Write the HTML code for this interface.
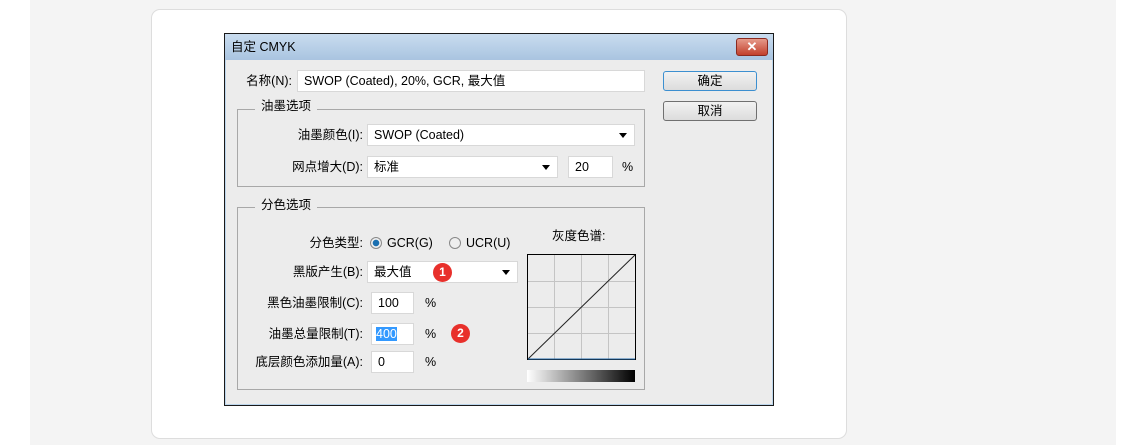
<!DOCTYPE html>
<html><head><meta charset="utf-8"><style>
*{margin:0;padding:0;box-sizing:border-box}
body{width:1146px;height:445px;background:#fff;position:relative;overflow:hidden;font-family:"Liberation Sans","Noto Sans CJK SC",sans-serif;font-size:12.5px;color:#000;line-height:16px}
.a{position:absolute}
.gray{left:30px;top:0;width:1086px;height:445px;background:#f4f4f4}
.card{left:151px;top:9px;width:696px;height:430px;background:#fff;border:1px solid #ddd;border-radius:9px}
.dlg{left:224px;top:33px;width:550px;height:373px;background:#ececec;border:1px solid #1a1a1a;box-shadow:inset 0 0 0 1px #bcd6ec}
.title{left:225px;top:34px;width:548px;height:26px;background:linear-gradient(#c9dcef,#a9c4e0)}
.close{left:736px;top:38px;width:32px;height:18px;border:1px solid #8a2a20;border-radius:3px;background:linear-gradient(#e69a8a,#c2402c);color:#fff;font-weight:bold;text-align:center;line-height:16px;font-size:13px}
.in{background:#fff;border:1px solid #d8d8d8;height:22px;line-height:20px;padding-left:6px}
.btn{border:1px solid #707070;border-radius:3px;background:linear-gradient(#f2f2f2,#dcdcdc);text-align:center;line-height:18px;height:20px;width:94px}
.grp{border:1px solid #a8a8a8}
.leg{background:#ececec;padding:0 6px}
.lbl{text-align:right;width:140px}
.arr{position:absolute;right:7px;top:8px;border-left:4px solid transparent;border-right:4px solid transparent;border-top:5px solid #000}
.badge{width:19px;height:19px;border-radius:50%;background:#e8302b;color:#fff;text-align:center;line-height:19px;font-size:12px;font-weight:bold}
.radio{width:12px;height:12px;border-radius:50%;border:1px solid #888;background:#eee}
</style></head><body>
<div class="a gray"></div>
<div class="a card"></div>
<div class="a dlg"></div>
<div class="a title"></div>
<div class="a" style="left:231px;top:39px">自定 CMYK</div>
<div class="a close">✕</div>

<div class="a" style="left:230px;top:73px;width:62px;text-align:right">名称(N):</div>
<div class="a in" style="left:297px;top:70px;width:348px">SWOP (Coated), 20%, GCR, 最大值</div>
<div class="a btn" style="left:663px;top:71px;border-color:#3c8fd0">确定</div>
<div class="a btn" style="left:663px;top:101px">取消</div>

<div class="a grp" style="left:237px;top:109px;width:408px;height:78px"></div>
<div class="a leg" style="left:255px;top:98px">油墨选项</div>
<div class="a lbl" style="left:223px;top:127px">油墨颜色(I):</div>
<div class="a in" style="left:367px;top:124px;width:268px">SWOP (Coated)<span class="arr"></span></div>
<div class="a lbl" style="left:223px;top:159px">网点增大(D):</div>
<div class="a in" style="left:367px;top:156px;width:191px">标准<span class="arr"></span></div>
<div class="a in" style="left:568px;top:156px;width:45px">20</div>
<div class="a" style="left:622px;top:159px">%</div>

<div class="a grp" style="left:237px;top:207px;width:408px;height:183px"></div>
<div class="a leg" style="left:255px;top:197px">分色选项</div>
<div class="a lbl" style="left:223px;top:235px">分色类型:</div>
<div class="a radio" style="left:370px;top:237px;background:radial-gradient(#1a6fb0 0 3px,#eee 3.5px)"></div>
<div class="a" style="left:387px;top:235px">GCR(G)</div>
<div class="a radio" style="left:449px;top:237px"></div>
<div class="a" style="left:466px;top:235px">UCR(U)</div>
<div class="a" style="left:552px;top:228px">灰度色谱:</div>
<div class="a lbl" style="left:223px;top:264px">黑版产生(B):</div>
<div class="a in" style="left:367px;top:261px;width:151px">最大值<span class="arr"></span></div>
<div class="a badge" style="left:433px;top:263px">1</div>
<div class="a lbl" style="left:223px;top:295px">黑色油墨限制(C):</div>
<div class="a in" style="left:371px;top:292px;width:43px">100</div>
<div class="a" style="left:425px;top:295px">%</div>
<div class="a lbl" style="left:223px;top:326px">油墨总量限制(T):</div>
<div class="a in" style="left:371px;top:323px;width:43px;padding-left:4px"><span style="background:#3399ff;color:#fff">400</span></div>
<div class="a" style="left:425px;top:326px">%</div>
<div class="a badge" style="left:451px;top:324px">2</div>
<div class="a lbl" style="left:223px;top:354px">底层颜色添加量(A):</div>
<div class="a in" style="left:371px;top:351px;width:43px">0</div>
<div class="a" style="left:425px;top:354px">%</div>

<svg class="a" style="left:527px;top:254px" width="110" height="107">
<rect x="0.5" y="0.5" width="108" height="105" fill="#ececec" stroke="#000"/>
<g stroke="#c4c4c4"><line x1="27.5" y1="1" x2="27.5" y2="105"/><line x1="54.5" y1="1" x2="54.5" y2="105"/><line x1="81.5" y1="1" x2="81.5" y2="105"/><line x1="1" y1="27.5" x2="108" y2="27.5"/><line x1="1" y1="53.5" x2="108" y2="53.5"/><line x1="1" y1="79.5" x2="108" y2="79.5"/></g>
<line x1="1" y1="105" x2="108" y2="1" stroke="#222"/>
<line x1="1" y1="105" x2="108" y2="105" stroke="#2a6fb0"/>
</svg>
<div class="a" style="left:527px;top:370px;width:108px;height:12px;background:linear-gradient(90deg,#fff,#000)"></div>
</body></html>
